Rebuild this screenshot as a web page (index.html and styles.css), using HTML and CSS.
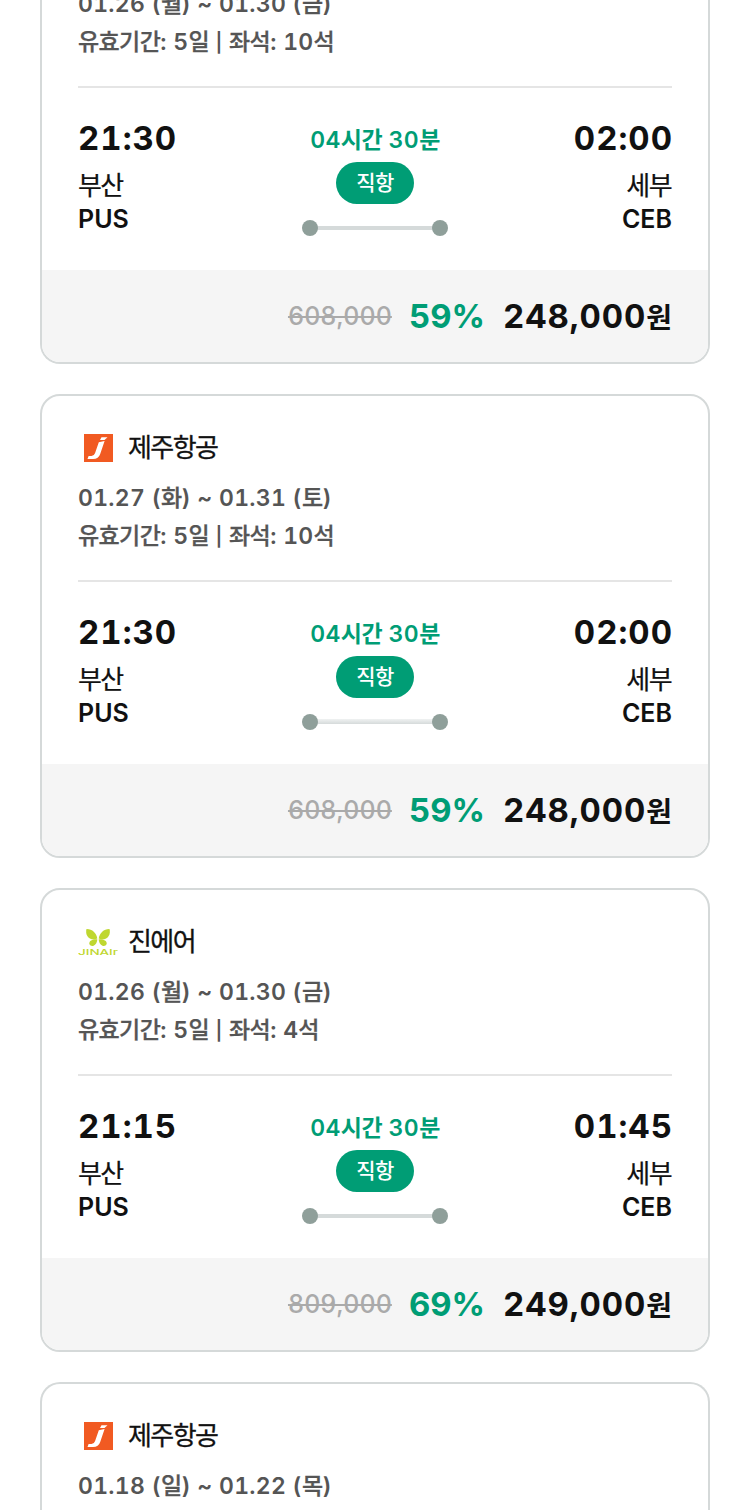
FILE: index.html
```
<!DOCTYPE html>
<html lang="ko">
<head>
  <meta charset="UTF-8">
  <title>부산 - 세부 항공권</title>
  <meta name="viewport" content="width=device-width, initial-scale=1.0">
  <link rel="stylesheet" href="styles.css">
</head>
<body>
  <svg class="symbols" width="0" height="0">
    <symbol id="jeju" viewBox="0 0 40 40">
      <rect x="6" y="6" width="29" height="28" fill="#f15a22"/>
      <path d="M23.500 9.200h6l-3 2.800h-4.500z" fill="#fff"/>
      <path d="M20.800 14.200L26.600 13 22.200 26Q20.600 31 15 31H9.500L10.600 28H13.500Q16 28 17 25.300z" fill="#fff"/>
    </symbol>
    <symbol id="jin" viewBox="0 0 40 40">
      <g fill="#bfd730">
        <path d="M19.300 16.500C18.500 11 14 6.800 8.500 7c-1.500 5 1.500 11 8 10.500z"/>
        <path d="M20.700 16.500c.8-5.500 5.300-9.700 10.800-9.500 1.500 5-1.500 11-8 10.500z"/>
        <path d="M19.300 17.200c-5.500 0-8.300 1.500-8 4.800 1.500 3.500 7.500 2.500 8-4.800z"/>
        <path d="M20.700 17.200c5.500 0 8.300 1.500 8 4.800-1.500 3.500-7.500 2.500-8-4.800z"/>
      </g>
      <text class="jin-text" x="0" y="33" textLength="40" lengthAdjust="spacingAndGlyphs">JINAIr</text>
    </symbol>
  </svg>

  <div class="list">
    <div class="card first">
      <div class="info">
        <div class="term">01.26 (<span class="ko">월</span>) ~ 01.30 (<span class="ko">금</span>)</div>
        <div class="term seat"><span class="ko">유효기간</span>: 5<span class="ko">일</span> <span class="bar">|</span> <span class="ko">좌석</span>: 10<span class="ko">석</span></div>
      </div>
      <div class="route">
        <div class="place">
          <strong class="time">21:30</strong>
          <span class="city">부산</span>
          <span class="code">PUS</span>
        </div>
        <div class="flight">
          <span class="duration">04<span class="ko">시간</span> 30<span class="ko">분</span></span>
          <span class="badge">직항</span>
          <div class="line"></div>
        </div>
        <div class="place arrive">
          <strong class="time">02:00</strong>
          <span class="city">세부</span>
          <span class="code">CEB</span>
        </div>
      </div>
      <div class="price">
        <del class="before">608,000</del>
        <span class="rate">59%</span>
        <strong class="total">248,000<span class="won">원</span></strong>
      </div>
    </div>

    <div class="card">
      <div class="info">
        <div class="airline"><svg class="logo"><use href="#jeju"/></svg><span class="name">제주항공</span></div>
        <div class="term">01.27 (<span class="ko">화</span>) ~ 01.31 (<span class="ko">토</span>)</div>
        <div class="term seat"><span class="ko">유효기간</span>: 5<span class="ko">일</span> <span class="bar">|</span> <span class="ko">좌석</span>: 10<span class="ko">석</span></div>
      </div>
      <div class="route">
        <div class="place">
          <strong class="time">21:30</strong>
          <span class="city">부산</span>
          <span class="code">PUS</span>
        </div>
        <div class="flight">
          <span class="duration">04<span class="ko">시간</span> 30<span class="ko">분</span></span>
          <span class="badge">직항</span>
          <div class="line soft"></div>
        </div>
        <div class="place arrive">
          <strong class="time">02:00</strong>
          <span class="city">세부</span>
          <span class="code">CEB</span>
        </div>
      </div>
      <div class="price">
        <del class="before">608,000</del>
        <span class="rate">59%</span>
        <strong class="total">248,000<span class="won">원</span></strong>
      </div>
    </div>

    <div class="card">
      <div class="info">
        <div class="airline"><svg class="logo"><use href="#jin"/></svg><span class="name">진에어</span></div>
        <div class="term">01.26 (<span class="ko">월</span>) ~ 01.30 (<span class="ko">금</span>)</div>
        <div class="term seat"><span class="ko">유효기간</span>: 5<span class="ko">일</span> <span class="bar">|</span> <span class="ko">좌석</span>: 4<span class="ko">석</span></div>
      </div>
      <div class="route">
        <div class="place">
          <strong class="time">21:15</strong>
          <span class="city">부산</span>
          <span class="code">PUS</span>
        </div>
        <div class="flight">
          <span class="duration">04<span class="ko">시간</span> 30<span class="ko">분</span></span>
          <span class="badge">직항</span>
          <div class="line"></div>
        </div>
        <div class="place arrive">
          <strong class="time">01:45</strong>
          <span class="city">세부</span>
          <span class="code">CEB</span>
        </div>
      </div>
      <div class="price">
        <del class="before">809,000</del>
        <span class="rate">69%</span>
        <strong class="total">249,000<span class="won">원</span></strong>
      </div>
    </div>

    <div class="card last">
      <div class="info">
        <div class="airline"><svg class="logo"><use href="#jeju"/></svg><span class="name">제주항공</span></div>
        <div class="term">01.18 (<span class="ko">일</span>) ~ 01.22 (<span class="ko">목</span>)</div>
      </div>
    </div>
  </div>
</body>
</html>
```
FILE: styles.css
```
* {
  box-sizing: border-box;
}
html, body {
  margin: 0;
  padding: 0;
  height: 1510px;
  overflow: hidden;
}
body {
  background: #fff;
  color: #111;
  font-family: Inter, "Noto Sans CJK KR", sans-serif;
  font-variant-numeric: tabular-nums;
}
.symbols {
  display: block;
}
.list {
  display: flex;
  flex-direction: column;
  gap: 30px;
  padding: 0 40px;
}
.card {
  flex: none;
  height: 464px;
  border: 2px solid #d5d9d9;
  border-radius: 20px;
  overflow: hidden;
}
.info {
  height: 186px;
  margin: 0 36px;
  padding-top: 32px;
  border-bottom: 2px solid #e5e5e5;
}
.first {
  height: 364px;
  border-top: 0;
  border-radius: 0 0 20px 20px;
}
.first .info {
  display: flex;
  flex-direction: column;
  justify-content: flex-end;
  height: 88px;
  padding: 0 0 25px;
}
.first .term {
  flex: none;
}
.last {
  height: 128px;
  border-bottom: 0;
  border-radius: 20px 20px 0 0;
}
.last .info {
  height: 126px;
  border: 0;
}
.airline {
  display: flex;
  align-items: center;
  gap: 10px;
  height: 40px;
  margin-bottom: 11px;
}
.logo {
  width: 40px;
  height: 40px;
}
.jin-text {
  font-family: Inter, sans-serif;
  font-size: 8px;
  font-weight: 500;
  fill: #bfd730;
}
.name {
  font-size: 26px;
  line-height: 40px;
  letter-spacing: -1.6px;
  -webkit-text-stroke: 0.3px;
}
.term {
  height: 38px;
  line-height: 38px;
  font-size: 23px;
  font-weight: 600;
  letter-spacing: 0.3px;
  color: #555;
  white-space: nowrap;
}
.ko {
  letter-spacing: -0.6px;
  font-weight: 500;
  -webkit-text-stroke: 0.3px;
}
.bar {
  font-size: 19px;
  vertical-align: 1px;
}
.route {
  display: flex;
  justify-content: space-between;
  height: 182px;
  padding: 30px 36px 0;
}
.place {
  display: flex;
  flex-direction: column;
  width: 150px;
}
.arrive {
  align-items: flex-end;
}
.time {
  font-size: 33px;
  font-weight: 700;
  line-height: 40px;
  letter-spacing: 1px;
}
.arrive .time {
  margin-right: -1px;
}
.city {
  margin-top: 11px;
  font-size: 26px;
  line-height: 34px;
  letter-spacing: -1.6px;
  -webkit-text-stroke: 0.2px;
}
.arrive .city {
  margin-right: 1px;
}
.code {
  margin-top: -1px;
  font-size: 25px;
  font-weight: 600;
  line-height: 34px;
}
.flight {
  display: flex;
  flex-direction: column;
  align-items: center;
}
.duration {
  height: 40px;
  padding-top: 4px;
  font-size: 23px;
  font-weight: 600;
  line-height: 36px;
  letter-spacing: 0.4px;
  color: #009d75;
}
.duration .ko {
  font-weight: 700;
  letter-spacing: -0.6px;
  -webkit-text-stroke: 0;
}
.badge {
  width: 78px;
  height: 42px;
  margin-top: 4px;
  border-radius: 21px;
  background: #009d75;
  color: #fff;
  font-size: 21px;
  font-weight: 500;
  line-height: 41px;
  letter-spacing: -0.5px;
  text-align: center;
}
.line {
  display: flex;
  align-items: center;
  justify-content: space-between;
  width: 146px;
  height: 16px;
  margin-top: 16px;
  background: linear-gradient(#d5dada, #d5dada) center / 130px 4px no-repeat;
}
.soft {
  background: linear-gradient(#f0f2f2, #d5dada) center 5px / 130px 5px no-repeat;
}
.line::before, .line::after {
  content: "";
  width: 16px;
  height: 16px;
  border-radius: 50%;
  background: #8f9f9a;
}
.price {
  display: flex;
  justify-content: flex-end;
  align-items: center;
  height: 92px;
  padding: 0 36px;
  background: #f5f5f5;
}
.before {
  padding-bottom: 1px;
  font-size: 25px;
  font-weight: 500;
  color: #aaa;
  text-decoration-thickness: 2px;
}
.rate {
  margin-left: 17px;
  font-size: 33px;
  font-weight: 700;
  color: #009d75;
}
.total {
  margin-left: 18px;
  font-size: 33px;
  font-weight: 700;
  letter-spacing: 0.9px;
}
.won {
  font-size: 28px;
  letter-spacing: 0;
}
```
